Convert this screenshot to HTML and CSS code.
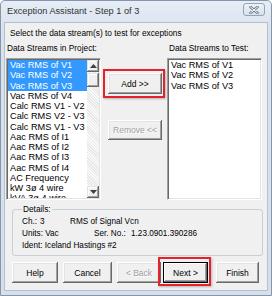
FILE: index.html
```
<!DOCTYPE html>
<html>
<head>
<meta charset="utf-8">
<link rel="stylesheet" href="styles.css">
</head>
<body>
<div class="window">
  <div class="titlebar">
    <span class="title">Exception Assistant - Step 1 of 3</span>
    <span class="close">
      <svg width="10" height="8" viewBox="0 0 10 8"><path d="M1.5 1 L8.5 7 M8.5 1 L1.5 7" stroke="#6e7b8c" stroke-width="2.6" stroke-linecap="round"/><path d="M1.5 1 L8.5 7 M8.5 1 L1.5 7" stroke="#ffffff" stroke-width="1" stroke-linecap="round"/></svg>
    </span>
  </div>
  <div class="client">
    <p class="instr">Select the data stream(s) to test for exceptions</p>
    <div class="streams">
      <div class="col col-left">
        <div class="label">Data Streams in Project:</div>
        <div class="listbox">
          <ul class="items">
            <li class="sel">Vac RMS of V1</li>
            <li class="sel">Vac RMS of V2</li>
            <li class="sel">Vac RMS of V3</li>
            <li>Vac RMS of V4</li>
            <li>Calc RMS V1 - V2</li>
            <li>Calc RMS V2 - V3</li>
            <li>Calc RMS V1 - V3</li>
            <li>Aac RMS of I1</li>
            <li>Aac RMS of I2</li>
            <li>Aac RMS of I3</li>
            <li>Aac RMS of I4</li>
            <li>AC Frequency</li>
            <li>kW 3ø 4 wire</li>
            <li>kVA 3ø 4 wire</li>
          </ul>
          <div class="scrollbar">
            <div class="sb-btn"><svg width="7" height="4" viewBox="0 0 7 4"><path d="M0 4 L3.5 0 L7 4 Z" fill="#404040"/></svg></div>
            <div class="sb-thumb"></div>
            <div class="sb-track"></div>
            <div class="sb-btn"><svg width="7" height="4" viewBox="0 0 7 4"><path d="M0 0 L3.5 4 L7 0 Z" fill="#404040"/></svg></div>
          </div>
        </div>
      </div>
      <div class="col col-mid">
        <button class="btn btn-add hl">Add &gt;&gt;</button>
        <button class="btn btn-remove" disabled>Remove &lt;&lt;</button>
      </div>
      <div class="col col-right">
        <div class="label label-right">Data Streams to Test:</div>
        <div class="listbox">
          <ul class="items">
            <li>Vac RMS of V1</li>
            <li>Vac RMS of V2</li>
            <li>Vac RMS of V3</li>
          </ul>
        </div>
      </div>
    </div>
    <fieldset class="details">
      <legend>Details:</legend>
      <div class="drow"><span class="k-ch">Ch.:</span><span class="v-ch">3</span><span>RMS of Signal Vcn</span></div>
      <div class="drow"><span class="k-units">Units: Vac</span><span class="k-ser">Ser. No.:</span><span>1.23.0901.390286</span></div>
      <div class="drow">Ident: Iceland Hastings #2</div>
    </fieldset>
    <div class="buttons">
      <button class="btn b-help">Help</button>
      <button class="btn b-cancel">Cancel</button>
      <button class="btn b-back" disabled>&lt; Back</button>
      <button class="btn b-next hl">Next &gt;</button>
      <button class="btn b-finish">Finish</button>
    </div>
  </div>
</div>
</body>
</html>
```
FILE: styles.css
```
html, body {
  margin: 0;
  padding: 0;
  background: #ffffff;
}

.window {
  width: 272px;
  height: 296px;
  box-sizing: border-box;
  border: 1px solid #8595aa;
  border-radius: 5px 5px 0 0;
  background: linear-gradient(#e6edf6, #d7e2ee 30px, #d5e0ec);
  display: flex;
  flex-direction: column;
  padding: 0 3px 4px 3px;
  font-family: "Liberation Sans", Arial, sans-serif;
  color: #000;
}

.titlebar {
  height: 21px;
  flex: none;
  display: flex;
  align-items: center;
  justify-content: space-between;
  padding-left: 3px;
}

.title {
  font-size: 9.2px;
  color: #333;
  margin-top: -1px;
}

.close {
  width: 22px;
  height: 13px;
  box-sizing: border-box;
  margin-right: 3px;
  margin-top: -4px;
  border: 1px solid #95a3b6;
  border-radius: 3px;
  background: linear-gradient(#eef2f7, #d9e1eb);
  display: flex;
  align-items: center;
  justify-content: center;
}

.client {
  flex: 1;
  background: #f0f0f0;
  border: 1px solid #b4c0cf;
  display: flex;
  flex-direction: column;
  padding-left: 1px;
}

.instr {
  margin: 4px 0 0 4px;
  font-size: 8.3px;
  line-height: 12px;
  height: 12px;
}

.streams {
  display: flex;
  margin-top: 3px;
}

.col {
  display: flex;
  flex-direction: column;
}

.col-left {
  width: 95px;
}

.col-mid {
  width: 54px;
  margin-left: 7px;
}

.col-right {
  width: 95px;
  margin-left: 5px;
}

.label {
  font-size: 8.3px;
  line-height: 12px;
  height: 12px;
  padding-left: 1px;
  white-space: nowrap;
}

.label-right {
  padding-left: 2px;
}

.listbox {
  margin-top: 4px;
  height: 142px;
  box-sizing: border-box;
  background: #fff;
  border-style: solid;
  border-width: 1px;
  border-color: #a0a0a0 #ffffff #ffffff #a0a0a0;
  box-shadow: inset 1px 1px 0 #696969, inset -1px -1px 0 #e3e3e3;
  padding: 1px 1px 1px 1px;
  display: flex;
  overflow: hidden;
}

.items {
  list-style: none;
  margin: 0;
  padding: 0;
  flex: 1;
  overflow: hidden;
  font-size: 9.2px;
}

.items li {
  height: 10.25px;
  line-height: 10.25px;
  padding-left: 2px;
  white-space: nowrap;
}

.items li.sel {
  background: #3399ff;
  color: #fff;
}

.scrollbar {
  width: 12px;
  flex: none;
  display: flex;
  flex-direction: column;
  background-color: #f4f4f4;
  background-image: repeating-linear-gradient(45deg, #e8e8e8 0 1px, #fafafa 1px 2px);
}

.sb-btn {
  height: 12px;
  box-sizing: border-box;
  background: #f0f0f0;
  box-shadow: inset -1px -1px 0 #696969, inset 1px 1px 0 #e3e3e3, inset -2px -2px 0 #a0a0a0, inset 2px 2px 0 #fff;
  display: flex;
  align-items: center;
  justify-content: center;
}

.sb-thumb {
  height: 14px;
  margin-top: 1px;
  background: #f0f0f0;
  box-shadow: inset -1px -1px 0 #696969, inset 1px 1px 0 #e3e3e3, inset -2px -2px 0 #a0a0a0, inset 2px 2px 0 #fff;
}

.sb-track {
  flex: 1;
}

.btn {
  position: relative;
  box-sizing: border-box;
  height: 21px;
  padding: 0;
  margin: 0;
  border: none;
  background: #f0f0f0;
  box-shadow: inset -1px -1px 0 #696969, inset 1px 1px 0 #ffffff, inset -2px -2px 0 #a0a0a0, inset 2px 2px 0 #e3e3e3;
  font-family: "Liberation Sans", Arial, sans-serif;
  font-size: 8.5px;
  color: #000;
  white-space: nowrap;
}

.btn:disabled {
  color: #a0a0a0;
  text-shadow: 1px 1px 0 #fff;
}

.btn.hl::after {
  content: "";
  position: absolute;
  left: -5px;
  right: -3px;
  top: -5px;
  bottom: -3px;
  border: 2px solid #e3222b;
  box-shadow: 1px 1px 2px rgba(0, 0, 0, 0.25);
}

.btn-add {
  margin-top: 31px;
  width: 54px;
}

.btn-add.hl::after {
  top: -4px;
  bottom: -4px;
}

.btn-remove {
  margin-top: 26px;
  width: 54px;
  height: 20px;
}

.details {
  margin: 3px 0 0 6px;
  width: 251px;
  box-sizing: border-box;
  padding: 0 0 3px 9px;
  border: 1px solid #c8cfd6;
  border-radius: 3px;
  font-size: 8.2px;
}

.details legend {
  padding: 0 1px;
  line-height: 12px;
  font-size: 8.3px;
}

.drow {
  display: flex;
  line-height: 12px;
  height: 12px;
  white-space: nowrap;
}

.drow:first-of-type {
  margin-top: 1px;
}

.k-ch {
  width: 18px;
}

.v-ch {
  width: 30px;
}

.k-units {
  width: 72px;
}

.k-ser {
  width: 37px;
}

.buttons {
  display: flex;
  margin-top: 6px;
}

.b-help {
  margin-left: 6px;
  width: 46px;
}

.b-cancel {
  margin-left: 5px;
  width: 49px;
}

.b-back {
  margin-left: 5px;
  width: 44px;
}

.b-next {
  margin-left: 2px;
  width: 45px;
  box-shadow: inset 0 0 0 1px #000, inset -2px -2px 0 #696969, inset 2px 2px 0 #ffffff, inset -3px -3px 0 #a0a0a0;
}

.b-finish {
  margin-left: 8px;
  width: 43px;
}
```
